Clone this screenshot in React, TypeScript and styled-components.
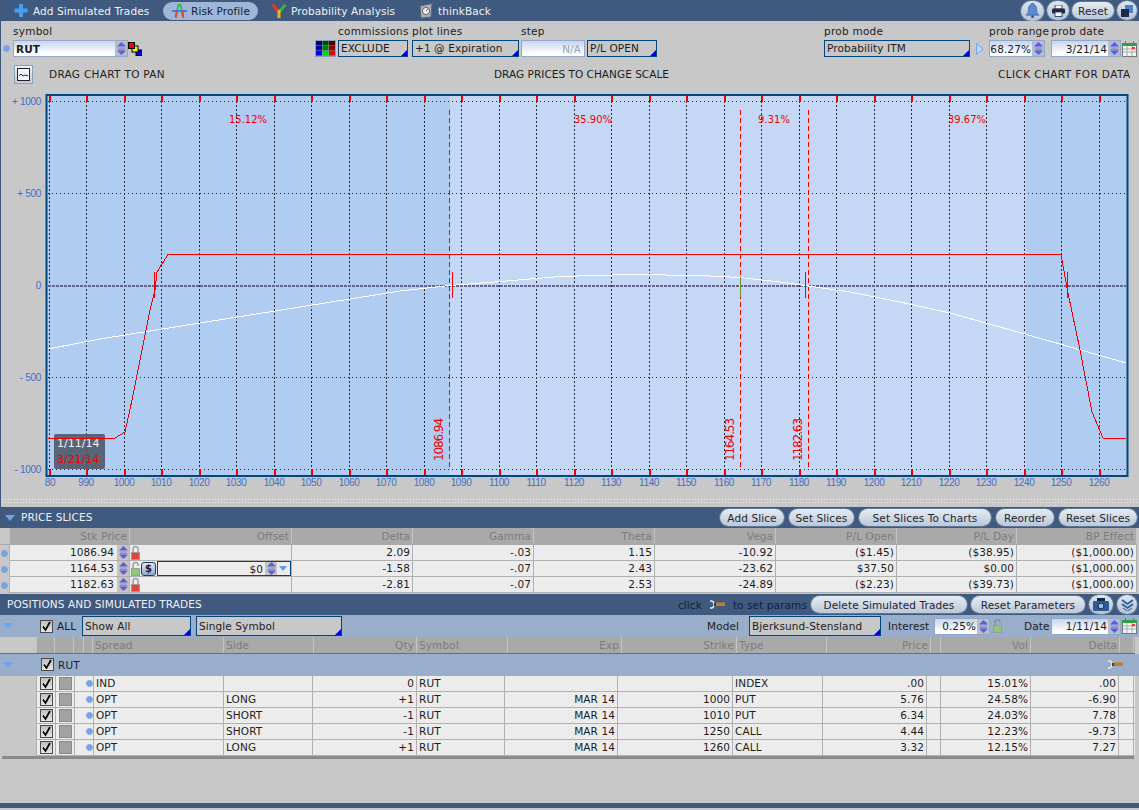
import * as React from 'react';
import styled, { createGlobalStyle } from 'styled-components';

const BAR = '#3f5a7e';
const PANEL = '#c8c8c8';
const STRIP = '#98aecb';
const NAVY = '#00467f';
const FONT = '"DejaVu Sans", "Liberation Sans", sans-serif';

const GlobalStyle = createGlobalStyle`
	html, body { margin: 0; padding: 0; background: ${PANEL}; }
	body { font-family: ${FONT}; font-size: 10.5px; letter-spacing: 0.1px; color: #1c1c1c; }
	#root { width: 1139px; height: 810px; overflow: hidden; }
	svg { flex: none; }
`;

const Page = styled.div`
	display: flex;
	flex-direction: column;
	width: 1139px;
	height: 810px;
`;

const TopBar = styled.div`
	display: flex;
	align-items: center;
	height: 21px;
	background: ${BAR};
	padding: 0 2px 0 13px;
`;

const TopItem = styled.div<{ $active?: boolean; $width: number; $pad?: number }>`
	display: flex;
	align-items: center;
	gap: 4px;
	width: ${p => p.$width}px;
	height: 18px;
	box-sizing: border-box;
	padding-left: ${p => p.$pad || 0}px;
	border-radius: 9px;
	white-space: nowrap;
	color: ${p => (p.$active ? '#10223c' : '#eef2f8')};
	background: ${p => (p.$active ? '#9fb6d6' : 'transparent')};
`;

const TopRight = styled.div`
	display: flex;
	align-items: center;
	gap: 3px;
	margin-left: auto;
`;

const RoundButton = styled.div<{ $size: number; $wide?: number }>`
	display: flex;
	align-items: center;
	justify-content: center;
	width: ${p => p.$wide || p.$size}px;
	height: ${p => p.$size}px;
	border-radius: ${p => p.$size / 2}px;
	background: linear-gradient(#dfe6ef, #b4c1d2);
	box-shadow: 0 0 0 1px #5d7798;
`;

const Pill = styled.div<{ $width: number }>`
	display: flex;
	align-items: center;
	justify-content: center;
	width: ${p => p.$width}px;
	height: 17px;
	border-radius: 9px;
	background: linear-gradient(#e6ebf2, #bcc8d8);
	box-shadow: 0 0 0 1px #5d7798;
	color: #1c2430;
	white-space: nowrap;
`;

const MainPanel = styled.div`
	display: flex;
	flex-direction: column;
	background: ${PANEL};
	box-shadow: inset 1px 0 0 ${BAR};
`;

const Controls = styled.div`
	display: grid;
	grid-template-columns: 13px 115px 187px 21px 2px 70px 4px 107px 2px 64px 2px 70px 167px 146px 19px 56px 6px 88px;
	grid-template-rows: 15px 17px;
	padding-top: 4px;
	height: 33px;
`;

const FieldLabel = styled.div<{ $col: number; $span?: number }>`
	grid-row: 1;
	grid-column: ${p => p.$col} / span ${p => p.$span || 1};
	letter-spacing: 0.25px;
	line-height: 13px;
	white-space: nowrap;
`;

const Slot = styled.div<{ $col: number; $center?: boolean }>`
	grid-row: 2;
	grid-column: ${p => p.$col};
	display: flex;
	align-items: center;
	justify-content: ${p => (p.$center ? 'center' : 'flex-start')};
	min-width: 0;
`;

const Combo = styled.div<{ $width?: number }>`
	position: relative;
	flex: none;
	box-sizing: border-box;
	width: ${p => (p.$width ? `${p.$width}px` : '100%')};
	height: ${p => (p.$width ? 20 : 17)}px;
	border: 1px solid ${NAVY};
	background: ${PANEL};
	padding-left: 2px;
	line-height: ${p => (p.$width ? 18 : 15)}px;
	white-space: nowrap;
	&::after {
		content: '';
		position: absolute;
		right: 0;
		bottom: 0;
		border-style: solid;
		border-width: 0 0 6px 6px;
		border-color: transparent transparent #0000e6 transparent;
	}
`;

const TextInput = styled.div<{ $width?: number; $align?: string }>`
	display: flex;
	align-items: center;
	justify-content: ${p => p.$align || 'flex-end'};
	flex: none;
	box-sizing: border-box;
	width: ${p => (p.$width ? `${p.$width}px` : '100%')};
	height: 17px;
	border: 1px solid #93a8c6;
	background: linear-gradient(#c6d6ee, #ffffff 85%);
	white-space: nowrap;
`;

const SymbolText = styled.span`
	flex: 1;
	padding-left: 2px;
	font-weight: bold;
`;

const SpinBox = styled.div`
	display: flex;
	align-items: center;
	justify-content: center;
	flex: none;
	width: 12px;
	height: 100%;
	background: #b4bdcc;
`;

const MutedText = styled.span`
	color: #9aa4b2;
	padding-right: 3px;
`;

const InputValue = styled.span`
	padding-right: 1px;
`;

const BlueDot = styled.span`
	display: block;
	flex: none;
	box-sizing: border-box;
	width: 7px;
	height: 7px;
	border-radius: 50%;
	background: #6fa4f4;
	border: 1px solid #8aa2c4;
`;

const SymbolDot = styled(BlueDot)`
	margin: 0 0 0 3px;
`;

const HintRow = styled.div`
	display: grid;
	grid-template-columns: 13px 36px 445px 504px 1fr;
	align-items: center;
	height: 20px;
	margin: 6px 0 4px;
	white-space: nowrap;
`;

const ChartToggle = styled.div`
	grid-column: 2;
	display: flex;
	align-items: center;
	justify-content: center;
	box-sizing: border-box;
	width: 19px;
	height: 19px;
	margin-left: 1px;
	background: linear-gradient(#eef1f6, #c4ccd8);
	border: 1px solid #8aa0bd;
`;

const Hint = styled.div<{ $right?: boolean; $spacing: number }>`
	text-align: ${p => (p.$right ? 'right' : 'left')};
	padding-right: ${p => (p.$right ? 9 : 0)}px;
	letter-spacing: ${p => p.$spacing}px;
`;

const ChartSvg = styled.svg`
	display: block;
	width: 1139px;
	height: 408px;
`;

const AxisText = styled.text<{ $tight?: boolean }>`
	font-family: "Liberation Sans", sans-serif;
	font-size: 10px;
	letter-spacing: ${p => (p.$tight ? -0.4 : -0.3)}px;
	fill: #3f6fc8;
`;

const PercentText = styled.text`
	font-family: ${FONT};
	font-size: 10px;
	letter-spacing: 0;
	fill: #f00000;
`;

const SliceText = styled.text`
	font-family: ${FONT};
	font-size: 12px;
	letter-spacing: -1.1px;
	fill: #f00000;
`;

const TipText = styled.text<{ $color: string }>`
	font-family: ${FONT};
	font-size: 11px;
	letter-spacing: 0;
	fill: ${p => p.$color};
`;

const Splitter = styled.div`
	height: 7px;
	margin: 2px 1px 2px 1px;
	background-color: #c8c8c8;
	background-image: radial-gradient(#ededed 1px, transparent 1px);
	background-size: 3px 3px;
`;

const SectionBar = styled.div<{ $height: number; $offset?: number }>`
	display: flex;
	align-items: center;
	flex: none;
	height: ${p => p.$height}px;
	margin-top: ${p => p.$offset || 0}px;
	background: ${BAR};
	padding: 0 2px 0 5px;
	color: #eef2f8;
	white-space: nowrap;
`;

const SectionTitle = styled.div<{ $gap: number }>`
	margin-left: ${p => p.$gap}px;
	padding-bottom: 1px;
`;

const BarActions = styled.div<{ $gap: number }>`
	display: flex;
	align-items: center;
	gap: ${p => p.$gap}px;
	margin-left: auto;
`;

const ClickHint = styled.div`
	display: flex;
	align-items: center;
	gap: 7px;
	color: #10223c;
`;

const GridRow = styled.div<{ $cols: string; $height: number; $bg: string; $line: string; $width: number }>`
	display: grid;
	grid-template-columns: ${p => p.$cols};
	flex: none;
	width: ${p => p.$width}px;
	height: ${p => p.$height}px;
	box-sizing: border-box;
	background: ${p => p.$bg};
	border-bottom: 1px solid ${p => p.$line};
`;

const Cell = styled.div<{ $right?: boolean; $bg?: string; $line?: string; $color?: string }>`
	display: flex;
	align-items: center;
	justify-content: ${p => (p.$right ? 'flex-end' : 'flex-start')};
	box-sizing: border-box;
	min-width: 0;
	padding: 0 ${p => (p.$right ? 2 : 0)}px 1px ${p => (p.$right ? 0 : 2)}px;
	border-right: 1px solid ${p => p.$line || '#b0b0b0'};
	background: ${p => p.$bg || 'transparent'};
	color: ${p => p.$color || '#1c1c1c'};
	white-space: nowrap;
`;

const IconCell = styled(Cell)`
	justify-content: center;
	padding: 0;
`;

const GutterCell = styled(Cell)`
	justify-content: center;
	padding: 0;
	margin-bottom: -1px;
	background: ${PANEL};
`;

const PriceCell = styled.div`
	display: flex;
	align-items: center;
	grid-column: 2;
	border-right: 1px solid #b0b0b0;
	box-sizing: border-box;
`;

const PriceValue = styled.div`
	flex: 1;
	text-align: right;
	padding: 0 3px 1px 0;
`;

const PriceSpin = styled.div`
	display: flex;
	align-items: center;
	justify-content: center;
	width: 12px;
	height: 100%;
	background: #c4c4c4;
`;

const OffsetCell = styled.div`
	display: flex;
	align-items: center;
	grid-column: 3;
	box-sizing: border-box;
	border-right: 1px solid #b0b0b0;
`;

const LockBox = styled.div`
	display: flex;
	align-items: center;
	justify-content: center;
	width: 11px;
	flex: none;
	height: 100%;
`;

const DollarButton = styled.div`
	display: flex;
	align-items: center;
	justify-content: center;
	box-sizing: border-box;
	width: 15px;
	height: 14px;
	flex: none;
	border: 1px solid #1c3d68;
	border-radius: 3px;
	background: linear-gradient(#dbe5f4, #8ea9d2);
	font-weight: bold;
	font-size: 10px;
`;

const OffsetEditor = styled.div`
	display: flex;
	align-items: center;
	justify-content: flex-end;
	flex: 1;
	height: 15px;
	margin-left: 1px;
	box-sizing: border-box;
	border: 1px solid ${NAVY};
	background: #ececec;
`;

const EditorSpin = styled.div`
	display: flex;
	align-items: center;
	justify-content: center;
	width: 12px;
	height: 100%;
	margin: 0 2px 0 2px;
	background: #c4c4c4;
`;

const OffsetDrop = styled.div`
	width: 0;
	height: 0;
	margin-right: 3px;
	border-style: solid;
	border-width: 5px 4px 0 4px;
	border-color: #5f9bea transparent transparent transparent;
`;

const EmptyCell = styled.div``;

const Strip = styled.div<{ $height: number; $lift?: number }>`
	display: flex;
	align-items: center;
	flex: none;
	height: ${p => p.$height}px;
	box-sizing: border-box;
	padding-bottom: ${p => p.$lift || 0}px;
	background: ${STRIP};
	white-space: nowrap;
`;

const Collapse = styled.div<{ $left: number; $gap: number }>`
	flex: none;
	width: 0;
	height: 0;
	margin: 0 ${p => p.$gap}px 0 ${p => p.$left}px;
	border-style: solid;
	border-width: 6px 5px 0 5px;
	border-color: #6ea4ee transparent transparent transparent;
`;

const CheckBox = styled.div`
	display: flex;
	align-items: center;
	justify-content: center;
	flex: none;
	box-sizing: border-box;
	width: 13px;
	height: 13px;
	background: linear-gradient(#c0c0c0, #e4e4e4);
	border: 1px solid #4a4a4a;
`;

const StripLabel = styled.div<{ $left: number; $width: number }>`
	flex: none;
	width: ${p => p.$width}px;
	margin-left: ${p => p.$left}px;
`;

const StripCombo = styled(Combo)<{ $left: number }>`
	margin-left: ${p => p.$left}px;
`;

const StripInput = styled(TextInput)<{ $left: number }>`
	margin-left: ${p => p.$left}px;
`;

const StripIcon = styled.div<{ $left: number }>`
	display: flex;
	flex: none;
	margin-left: ${p => p.$left}px;
`;

const ChartChip = styled.div`
	width: 13px;
	height: 13px;
	box-sizing: border-box;
	background: #a2a2a2;
	border: 1px solid #8a8a8a;
`;

const TableBottom = styled.div`
	flex: none;
	height: 3px;
	background: #8a8a8a;
	margin: 0 5px 0 2px;
`;

const Spacer = styled.div`
	flex: 1;
	background: ${PANEL};
`;

const BottomBar = styled.div`
	flex: none;
	height: 5px;
	background: ${BAR};
	margin-bottom: 2px;
`;

/* icons */
const Spin: React.FC = () => (
	<svg width="9" height="13" viewBox="0 0 9 13">
		<polygon points="4.5,0 9,4.5 0,4.5" fill="#5b5be6" />
		<rect x="1" y="5.5" width="7" height="1" fill="#7f8fb0" />
		<rect x="1" y="7" width="7" height="1" fill="#7f8fb0" />
		<polygon points="0,8.5 9,8.5 4.5,13" fill="#5b5be6" />
	</svg>
);

const Lock: React.FC<{ $open?: boolean }> = ({ $open }) => (
	<svg width="9" height="14" viewBox="0 0 9 14">
		<path d={$open ? 'M2 7V3a2.5 2.5 0 0 1 5 0v1' : 'M2 7V3a2.5 2.5 0 0 1 5 0v4'} fill="none" stroke="#8b8b8b" strokeWidth="1.2" />
		<rect x="0.5" y="6.5" width="8" height="7" fill={$open ? '#8fc77f' : '#e2453a'} stroke="#9a9a9a" />
	</svg>
);

const Calendar: React.FC = () => (
	<svg width="15" height="16" viewBox="0 0 15 16">
		<rect x="0.5" y="2.5" width="14" height="13" fill="#f4f4f4" stroke="#777" />
		<rect x="0" y="2" width="15" height="3" fill="#2f9e44" />
		<rect x="3" y="0" width="1" height="3" fill="#2f9e44" />
		<rect x="11" y="0" width="1" height="3" fill="#2f9e44" />
		<path d="M1 8h13M1 11h13M5 5v10M10 5v10" stroke="#aaa" />
		<rect x="10" y="6" width="3" height="2" fill="#e33" />
	</svg>
);

const Check: React.FC = () => (
	<svg width="11" height="11" viewBox="0 0 11 11">
		<path d="M2 5.5 L4.5 9 L9 1" fill="none" stroke="#000" strokeWidth="1.7" />
	</svg>
);

const Wrench: React.FC = () => (
	<svg width="17" height="9" viewBox="0 0 17 9">
		<path d="M3 1H1M3 8H1M3 1a3.5 3.5 0 0 1 2 3.5a3.5 3.5 0 0 1-2 3.5" fill="none" stroke="#e8e8f0" strokeWidth="1.4" />
		<rect x="5" y="3" width="2" height="3" fill="#3a3a50" />
		<rect x="7" y="2.5" width="9" height="3.5" fill="#c77a2a" />
	</svg>
);

const PlusIcon: React.FC = () => (
	<svg width="16" height="15" viewBox="0 0 15 15">
		<path d="M5 0.5h5v4.5h4.5v5H10v4.5H5V10H0.5V5H5z" fill="#4d9be8" stroke="#2a5f9e" />
	</svg>
);

const RiskIcon: React.FC = () => (
	<svg width="15" height="16" viewBox="0 0 16 16">
		<path d="M5.5 7 L7 1.5 H9 L10.5 7" fill="none" stroke="#3fb34f" strokeWidth="2" />
		<rect x="0" y="7" width="16" height="2" fill="#3d78d8" />
		<path d="M4 15 L5 9 M12 15 L11 9" fill="none" stroke="#e0452f" strokeWidth="2.4" />
	</svg>
);

const ProbIcon: React.FC = () => (
	<svg width="16" height="16" viewBox="0 0 16 16">
		<path d="M1.5 1.5 L8 9" stroke="#e23b2b" strokeWidth="3" />
		<path d="M14.5 1.5 L8 9" stroke="#3cb043" strokeWidth="3" />
		<path d="M8 7 L8 15" stroke="#f0b020" strokeWidth="3" />
	</svg>
);

const BackIcon: React.FC = () => (
	<svg width="16" height="16" viewBox="0 0 16 16">
		<polygon points="2,3 14,0.5 13,14 3,15" fill="#a9b2bd" stroke="#5e6670" />
		<circle cx="8" cy="8" r="3.6" fill="#e6ecf3" stroke="#5e6670" />
		<path d="M8 8 L10 6" stroke="#c33" />
	</svg>
);

const BellIcon: React.FC = () => (
	<svg width="15" height="17" viewBox="0 0 16 18">
		<path d="M8 1c1 0 1.5.6 1.5 1.4C12 3.4 12.5 6 12.5 9c0 2.4 1 3.6 2.5 5H1c1.500-1.400 2.500-2.600 2.500-5 0-3 .5-5.600 3-6.600C6.500 1.600 7 1 8 1z" fill="#5a8ad0" stroke="#35588f" strokeWidth=".6" />
		<circle cx="8" cy="15.500" r="1.600" fill="#35588f" />
	</svg>
);

const PrintIcon: React.FC = () => (
	<svg width="13" height="12" viewBox="0 0 13 12">
		<rect x="3" y="0" width="7" height="4" fill="#f4f6fa" stroke="#1d2c44" strokeWidth=".8" />
		<rect x="0" y="3.500" width="13" height="5" rx="1" fill="#1d2c44" />
		<rect x="3" y="7" width="7" height="4.500" fill="#f4f6fa" stroke="#1d2c44" strokeWidth=".8" />
	</svg>
);

const PopIcon: React.FC = () => (
	<svg width="12" height="12" viewBox="0 0 12 12">
		<rect x="4" y="0" width="8" height="8" fill="#4f7fc4" />
		<rect x="0" y="4" width="8" height="8" fill="#1d2c44" />
	</svg>
);

const Swatches: React.FC = () => (
	<svg width="14" height="14" viewBox="0 0 14 14">
		<rect x="8" y="8" width="6" height="6" fill="#0000e0" stroke="#000" />
		<rect x="4" y="4" width="6" height="6" fill="#f4f400" stroke="#000" />
		<rect x="0.500" y="0.500" width="6" height="6" fill="#f00000" stroke="#000" />
	</svg>
);

const ColorGrid: React.FC = () => {
	const colors = ['#00006e', '#004d00', '#4d0000', '#0000b0', '#008000', '#9a0000', '#0000f0', '#00e000', '#f00000'];
	return (
		<svg width="21" height="17" viewBox="0 0 21 17">
			<rect width="21" height="17" fill="#8aa0bd" />
			{colors.map((c, i) => (
				<rect key={c} x={1 + (i % 3) * 6.500} y={1 + Math.floor(i / 3) * 5} width="6" height="4.500" fill={c} />
			))}
		</svg>
	);
};

const MiniChart: React.FC = () => (
	<svg width="13" height="13" viewBox="0 0 13 13">
		<rect x="0.500" y="0.500" width="12" height="12" fill="#f4f6fa" stroke="#222" />
		<path d="M2 8 L4 6 L6 8 L8 7 L11 8" fill="none" stroke="#222" />
	</svg>
);

const CameraIcon: React.FC = () => (
	<svg width="16" height="13" viewBox="0 0 16 13">
		<rect x="0" y="3" width="16" height="10" rx="1" fill="#2f5c96" />
		<circle cx="8" cy="8" r="3" fill="#9dbbe0" stroke="#12284a" />
		<rect x="4" y="0" width="8" height="3" fill="#12284a" />
	</svg>
);

const DoubleDown: React.FC = () => (
	<svg width="13" height="13" viewBox="0 0 13 13">
		<path d="M1 2 L6.500 6 L12 2 M1 6 L6.500 10 L12 6" fill="none" stroke="#2f5c96" strokeWidth="1.800" />
		<path d="M2 10 L6.500 13 L11 10" fill="none" stroke="#2f5c96" />
	</svg>
);

const ProbArrow: React.FC = () => (
	<svg width="8" height="12" viewBox="0 0 8 12">
		<polygon points="0.500,0.500 7,6 0.500,11.500" fill="#c4d8f5" stroke="#6ea4ee" />
	</svg>
);

/* chart */
const GRID = '#2b2b40';
const xOf = (v: number) => Math.round(48.7 + (v - 980) * 3.751);
const STRIKES = Array.from({ length: 29 }, (_, i) => 980 + i * 10);
const LEVELS = [
	{ y: 101.5, label: '+ 1000' },
	{ y: 193.5, label: '+ 500' },
	{ y: 377.5, label: '- 500' },
	{ y: 469.5, label: '- 1000' },
];
const PERCENTS = [
	{ x: 248, label: '15.12%' },
	{ x: 593, label: '35.90%' },
	{ x: 774, label: '9.31%' },
	{ x: 967, label: '39.67%' },
];
const SLICES = [
	{ x: 449.5, textX: 443, label: '1086.94' },
	{ x: 740.5, textX: 733.5, label: '1164.53' },
	{ x: 808.5, textX: 802, label: '1182.63' },
];
const PL_LINE =
	'48,438 115,438 125,432 132,400 150,310 155,290 157,272 168,254.500 1061,254.500 1068,293 1080,350 1092,412 1103,438 1126,438';
const DAY_LINE =
	'48,349 100,339 150,331 200,323 250,315 300,307 350,299 400,291 450,285.500 500,281.500 560,276.500 630,274.500 700,275.500 740,277.500 780,282 805,285.500 850,292 900,302 950,313 1000,327 1060,344 1126,363';

const RiskChart: React.FC = () => (
	<ChartSvg viewBox="0 88 1139 408">
		<rect x="46.500" y="95" width="1081" height="381" fill="#b0ccf0" stroke={NAVY} strokeWidth="2" />
		<rect x="450" y="96" width="576" height="379" fill="#c4d8f5" />
		<g shapeRendering="crispEdges">
			{STRIKES.map(v => (
				<line key={v} x1={xOf(v) + 0.5} x2={xOf(v) + 0.5} y1="101" y2="469" stroke={GRID} strokeDasharray="2 2" />
			))}
			{LEVELS.map(l => (
				<line key={l.y} x1="48" x2="1126" y1={l.y} y2={l.y} stroke={GRID} strokeDasharray="1 3" />
			))}
			<line x1="48" x2="1126" y1="286" y2="286" stroke="#66668f" strokeWidth="2" strokeDasharray="3 1" />
			{STRIKES.map(v => (
				<React.Fragment key={v}>
					<rect x={xOf(v)} y="96" width="2" height="6" fill="#f00000" />
					<rect x={xOf(v)} y="469" width="2" height="6" fill="#f00000" />
				</React.Fragment>
			))}
			{SLICES.map(s => (
				<line key={s.x} x1={s.x} x2={s.x} y1="110" y2="467" stroke="#f00000" strokeDasharray="5 3" />
			))}
		</g>
		<rect x="54" y="434" width="51" height="35" rx="2" fill="#4b5163" fillOpacity="0.85" />
		<TipText x="57" y="447" $color="#f2f2f2">1/11/14</TipText>
		<TipText x="57" y="463" $color="#f00000">3/21/14</TipText>
		<g shapeRendering="crispEdges" fill="none">
			<polyline points={DAY_LINE} stroke="#ffffff" />
			<polyline points={PL_LINE} stroke="#f00000" strokeWidth="1" />
			<line x1="154.500" x2="154.500" y1="272" y2="298" stroke="#f00000" />
			<line x1="1067.500" x2="1067.500" y1="272" y2="298" stroke="#f00000" />
			<line x1="452.500" x2="452.500" y1="272" y2="298" stroke="#f00000" />
			<line x1="805.500" x2="805.500" y1="272" y2="298" stroke="#f00000" />
			<line x1="740.500" x2="740.500" y1="277" y2="297" stroke="#7d8a20" />
		</g>
		{PERCENTS.map(p => (
			<PercentText key={p.label} x={p.x} y="123" textAnchor="middle">{p.label}</PercentText>
		))}
		{SLICES.map(s => (
			<SliceText key={s.label} transform={`translate(${s.textX} 461) rotate(-90)`}>{s.label}</SliceText>
		))}
		{LEVELS.map(l => (
			<AxisText key={l.label} x="41" y={l.y + 3.500} textAnchor="end">{l.label}</AxisText>
		))}
		<AxisText x="41" y="289" textAnchor="end">0</AxisText>
		{STRIKES.map(v => (
			<AxisText key={v} $tight x={v === 980 ? 50 : xOf(v)} y="486" textAnchor="middle">
				{v === 980 ? '80' : v}
			</AxisText>
		))}
	</ChartSvg>
);

/* tables */
const SLICE_COLS = '10px 120px 162px 121px 121px 121px 121px 121px 120px 120px';
const HEAD_COLS = '37px 18px 19px 10px 9px 131px 90px 103px 91px 114px 115px 90px 104px 10px 90px 89px 14px';
const ROW_COLS = '37px 19px 19px 10px 9px 130px 89px 104px 88px 113px 115px 90px 104px 14px 90px 88px 15px';

const SLICE_HEAD = ['Delta', 'Gamma', 'Theta', 'Vega', 'P/L Open', 'P/L Day', 'BP Effect'];
const SLICE_ROWS = [
	{ price: '1086.94', editing: false, values: ['2.09', '-.03', '1.15', '-10.92', '($1.45)', '($38.95)', '($1,000.00)'] },
	{ price: '1164.53', editing: true, values: ['-1.58', '-.07', '2.43', '-23.62', '$37.50', '$0.00', '($1,000.00)'] },
	{ price: '1182.63', editing: false, values: ['-2.81', '-.07', '2.53', '-24.89', '($2.23)', '($39.73)', '($1,000.00)'] },
];

const POSITIONS = [
	{ spread: 'IND', side: '', qty: '0', exp: '', strike: '', type: 'INDEX', price: '.00', vol: '15.01%', delta: '.00' },
	{ spread: 'OPT', side: 'LONG', qty: '+1', exp: 'MAR 14', strike: '1000', type: 'PUT', price: '5.76', vol: '24.58%', delta: '-6.90' },
	{ spread: 'OPT', side: 'SHORT', qty: '-1', exp: 'MAR 14', strike: '1010', type: 'PUT', price: '6.34', vol: '24.03%', delta: '7.78' },
	{ spread: 'OPT', side: 'SHORT', qty: '-1', exp: 'MAR 14', strike: '1250', type: 'CALL', price: '4.44', vol: '12.23%', delta: '-9.73' },
	{ spread: 'OPT', side: 'LONG', qty: '+1', exp: 'MAR 14', strike: '1260', type: 'CALL', price: '3.32', vol: '12.15%', delta: '7.27' },
];

const HEAD_COLOR = '#7c7c7c';
const HEAD_BG = '#a9a9a9';
const HEAD_LINE = '#c4c4c4';
const ROW_BG = '#ececec';

const PriceSlices: React.FC = () => (
	<>
		<GridRow $cols={SLICE_COLS} $width={1137} $height={17} $bg={HEAD_BG} $line={HEAD_BG}>
			<Cell $bg={PANEL} $line={HEAD_LINE} />
			<Cell $right $color={HEAD_COLOR} $line={HEAD_LINE}>Stk Price</Cell>
			<Cell $right $color={HEAD_COLOR} $line={HEAD_LINE}>Offset</Cell>
			{SLICE_HEAD.map(h => (
				<Cell key={h} $right $color={HEAD_COLOR} $line={HEAD_LINE}>{h}</Cell>
			))}
		</GridRow>
		{SLICE_ROWS.map(row => (
			<GridRow key={row.price} $cols={SLICE_COLS} $width={1137} $height={16} $bg={ROW_BG} $line="#b0b0b0">
				<GutterCell $line="#b0b0b0"><BlueDot /></GutterCell>
				<PriceCell>
					<PriceValue>{row.price}</PriceValue>
					<PriceSpin><Spin /></PriceSpin>
				</PriceCell>
				<OffsetCell>
					<LockBox><Lock $open={row.editing} /></LockBox>
					{row.editing && (
						<>
							<DollarButton>$</DollarButton>
							<OffsetEditor>
								$0
								<EditorSpin><Spin /></EditorSpin>
								<OffsetDrop />
							</OffsetEditor>
						</>
					)}
				</OffsetCell>
				{row.values.map((v, i) => (
					<Cell key={SLICE_HEAD[i]} $right>{v}</Cell>
				))}
			</GridRow>
		))}
	</>
);

const PositionsTable: React.FC = () => (
	<>
		<GridRow $cols={HEAD_COLS} $width={1135} $height={17} $bg={HEAD_BG} $line="#6e6e6e">
			<Cell $bg={PANEL} $line={HEAD_LINE} />
			<Cell $line={HEAD_LINE} />
			<Cell $line={HEAD_LINE} />
			<Cell $line={HEAD_LINE} />
			<Cell $line={HEAD_LINE} />
			<Cell $color={HEAD_COLOR} $line={HEAD_LINE}>Spread</Cell>
			<Cell $color={HEAD_COLOR} $line={HEAD_LINE}>Side</Cell>
			<Cell $right $color={HEAD_COLOR} $line={HEAD_LINE}>Qty</Cell>
			<Cell $color={HEAD_COLOR} $line={HEAD_LINE}>Symbol</Cell>
			<Cell $right $color={HEAD_COLOR} $line={HEAD_LINE}>Exp</Cell>
			<Cell $right $color={HEAD_COLOR} $line={HEAD_LINE}>Strike</Cell>
			<Cell $color={HEAD_COLOR} $line={HEAD_LINE}>Type</Cell>
			<Cell $right $color={HEAD_COLOR} $line={HEAD_LINE}>Price</Cell>
			<Cell $line={HEAD_LINE} />
			<Cell $right $color={HEAD_COLOR} $line={HEAD_LINE}>Vol</Cell>
			<Cell $right $color={HEAD_COLOR} $line={HEAD_LINE}>Delta</Cell>
			<Cell $line={HEAD_LINE} />
		</GridRow>
		<Strip $height={22} $lift={1}>
			<Collapse $left={3} $gap={28} />
			<CheckBox><Check /></CheckBox>
			<StripLabel $left={4} $width={20}>RUT</StripLabel>
			<StripIcon $left={1029}><Wrench /></StripIcon>
		</Strip>
		{POSITIONS.map(p => (
			<GridRow key={p.strike + p.spread} $cols={ROW_COLS} $width={1135} $height={16} $bg={ROW_BG} $line="#b0b0b0">
				<GutterCell $line="#b0b0b0" />
				<IconCell><CheckBox><Check /></CheckBox></IconCell>
				<IconCell><ChartChip /></IconCell>
				<EmptyCell />
				<IconCell><BlueDot /></IconCell>
				<Cell>{p.spread}</Cell>
				<Cell>{p.side}</Cell>
				<Cell $right>{p.qty}</Cell>
				<Cell>RUT</Cell>
				<Cell $right>{p.exp}</Cell>
				<Cell $right>{p.strike}</Cell>
				<Cell>{p.type}</Cell>
				<Cell $right>{p.price}</Cell>
				<Cell />
				<Cell $right>{p.vol}</Cell>
				<Cell $right>{p.delta}</Cell>
				<Cell />
			</GridRow>
		))}
		<TableBottom />
	</>
);

const App: React.FC = () => (
	<Page>
		<GlobalStyle />
		<TopBar>
			<TopItem $width={150}><PlusIcon />Add Simulated Trades</TopItem>
			<TopItem $width={95} $pad={9} $active><RiskIcon />Risk Profile</TopItem>
			<TopItem $width={147} $pad={13}><ProbIcon />Probability Analysis</TopItem>
			<TopItem $width={90} $pad={13}><BackIcon />thinkBack</TopItem>
			<TopRight>
				<RoundButton $size={20} $wide={23}><BellIcon /></RoundButton>
				<RoundButton $size={19} $wide={22}><PrintIcon /></RoundButton>
				<Pill $width={42}>Reset</Pill>
				<RoundButton $size={19} $wide={20}><PopIcon /></RoundButton>
			</TopRight>
		</TopBar>
		<MainPanel>
			<Controls>
				<FieldLabel $col={2}>symbol</FieldLabel>
				<FieldLabel $col={6} $span={2}>commissions</FieldLabel>
				<FieldLabel $col={8}>plot lines</FieldLabel>
				<FieldLabel $col={10}>step</FieldLabel>
				<FieldLabel $col={14}>prob mode</FieldLabel>
				<FieldLabel $col={16} $span={2}>prob range</FieldLabel>
				<FieldLabel $col={18}>prob date</FieldLabel>

				<Slot $col={1}><SymbolDot /></Slot>
				<Slot $col={2}>
					<TextInput $align="flex-start">
						<SymbolText>RUT</SymbolText>
						<SpinBox><Spin /></SpinBox>
					</TextInput>
				</Slot>
				<Slot $col={3}><Swatches /></Slot>
				<Slot $col={4}><ColorGrid /></Slot>
				<Slot $col={6}><Combo>EXCLUDE</Combo></Slot>
				<Slot $col={8}><Combo>+1 @ Expiration</Combo></Slot>
				<Slot $col={10}><TextInput><MutedText>N/A</MutedText></TextInput></Slot>
				<Slot $col={12}><Combo>P/L OPEN</Combo></Slot>
				<Slot $col={14}><Combo>Probability ITM</Combo></Slot>
				<Slot $col={15} $center><ProbArrow /></Slot>
				<Slot $col={16}>
					<TextInput>
						<InputValue>68.27%</InputValue>
						<SpinBox><Spin /></SpinBox>
					</TextInput>
				</Slot>
				<Slot $col={18}>
					<TextInput $width={70}>
						<InputValue>3/21/14</InputValue>
						<SpinBox><Spin /></SpinBox>
					</TextInput>
					<StripIcon $left={1}><Calendar /></StripIcon>
				</Slot>
			</Controls>
			<HintRow>
				<ChartToggle><MiniChart /></ChartToggle>
				<Hint $spacing={0.3}>DRAG CHART TO PAN</Hint>
				<Hint $spacing={0.03}>DRAG PRICES TO CHANGE SCALE</Hint>
				<Hint $right $spacing={0.4}>CLICK CHART FOR DATA</Hint>
			</HintRow>
			<RiskChart />
			<Splitter />
		</MainPanel>
		<SectionBar $height={21}>
			<Collapse $left={0} $gap={6} />
			<SectionTitle $gap={0}>PRICE SLICES</SectionTitle>
			<BarActions $gap={5}>
				<Pill $width={64}>Add Slice</Pill>
				<Pill $width={65}>Set Slices</Pill>
				<Pill $width={132}>Set Slices To Charts</Pill>
				<Pill $width={58}>Reorder</Pill>
				<Pill $width={78}>Reset Slices</Pill>
			</BarActions>
		</SectionBar>
		<PriceSlices />
		<SectionBar $height={21} $offset={1}>
			<SectionTitle $gap={2}>POSITIONS AND SIMULATED TRADES</SectionTitle>
			<BarActions $gap={4}>
				<ClickHint>click <Wrench /> to set params</ClickHint>
				<Pill $width={156}>Delete Simulated Trades</Pill>
				<Pill $width={114}>Reset Parameters</Pill>
				<RoundButton $size={19} $wide={24}><CameraIcon /></RoundButton>
				<RoundButton $size={19} $wide={20}><DoubleDown /></RoundButton>
			</BarActions>
		</SectionBar>
		<Strip $height={22}>
			<Collapse $left={3} $gap={27} />
			<CheckBox><Check /></CheckBox>
			<StripLabel $left={4} $width={21}>ALL</StripLabel>
			<StripCombo $left={4} $width={109}>Show All</StripCombo>
			<StripCombo $left={5} $width={146}>Single Symbol</StripCombo>
			<StripLabel $left={365} $width={36}>Model</StripLabel>
			<StripCombo $left={6} $width={132}>Bjerksund-Stensland</StripCombo>
			<StripLabel $left={7} $width={40}>Interest</StripLabel>
			<StripInput $left={6} $width={56}>
				<InputValue>0.25%</InputValue>
				<SpinBox><Spin /></SpinBox>
			</StripInput>
			<StripIcon $left={3}><Lock $open /></StripIcon>
			<StripLabel $left={22} $width={24}>Date</StripLabel>
			<StripInput $left={3} $width={70}>
				<InputValue>1/11/14</InputValue>
				<SpinBox><Spin /></SpinBox>
			</StripInput>
			<StripIcon $left={1}><Calendar /></StripIcon>
		</Strip>
		<PositionsTable />
		<Spacer />
		<BottomBar />
	</Page>
);

export default App;
